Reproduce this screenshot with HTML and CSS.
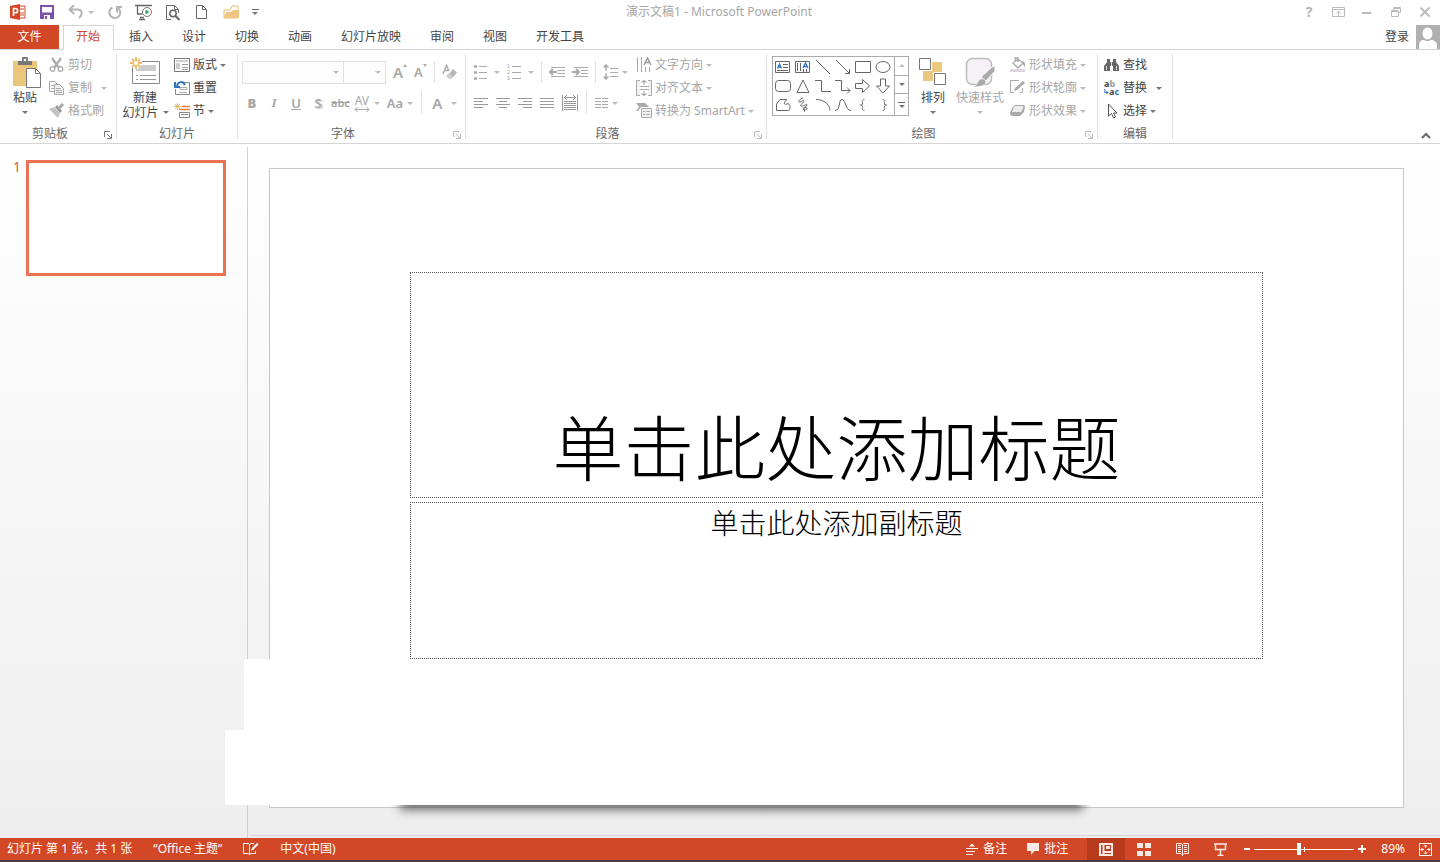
FILE: index.html
```html
<!DOCTYPE html>
<html lang="zh-CN">
<head>
<meta charset="utf-8">
<title>演示文稿1 - Microsoft PowerPoint</title>
<link rel="stylesheet" href="styles.css">
</head>
<body>
<div class="app">
  <header class="titlebar">
    <div class="quick">
      <button class="qbtn" aria-label="PowerPoint"><svg width="16" height="16" viewBox="0 0 16 16"><path d="M9 2h6v12H9z" fill="#fff" stroke="#d24726"/><path d="M10 5h4M10 9h4M10 11h4" stroke="#d24726"/><path d="M0 2l10-2v16L0 14z" fill="#d24726"/><path d="M3.500 12V4.500h2a2 2 0 0 1 0 4.300h-2" fill="none" stroke="#fff" stroke-width="1.600"/></svg></button>
      <button class="qbtn" aria-label="保存"><svg width="14" height="14" viewBox="0 0 14 14"><path d="M1 1h12v12H1z" fill="#fff" stroke="#8050a8" stroke-width="2"/><path d="M1 7.500h12v5.500H1z" fill="#8050a8"/><path d="M4 10h6v4H4z" fill="#fff"/><path d="M5 11h2v3H5z" fill="#8050a8"/></svg></button>
      <div class="qsplit"><button class="qbtn" aria-label="撤消"><svg width="16" height="14" viewBox="0 0 16 14"><path d="M6 0L1.500 4.500 6 9M2 4.500h7c6 0 6 5 2 8.500" fill="none" stroke="#b4b4b4" stroke-width="2"/></svg></button><button class="drop off" aria-label="撤消选项"></button></div>
      <button class="qbtn" aria-label="重复"><svg width="15" height="15" viewBox="0 0 15 15"><path d="M4.500 2.500A5.500 5.500 0 1 0 10 3M9 7.500V2h5" fill="none" stroke="#b4b4b4" stroke-width="2"/></svg></button>
      <button class="qbtn" aria-label="放映"><svg width="18" height="17" viewBox="0 0 18 17"><path d="M0 1.500h17M2.500 2v8h5M9 13.500H5M10 15.500H4" fill="none" stroke="#666" stroke-width="1.300"/><circle cx="12" cy="8" r="4.500" fill="#fff" stroke="#777"/><path d="M10.500 5.500l4 2.500-4 2.500z" fill="#3c9b6b"/></svg></button>
      <button class="qbtn" aria-label="预览"><svg width="16" height="17" viewBox="0 0 16 17"><path d="M6 15.500H1.500v-14h8l4 4V9M9.500 1.500v4h4" fill="none" stroke="#666"/><circle cx="8" cy="9.500" r="3.200" fill="#fff" stroke="#666" stroke-width="1.500"/><path d="M10.500 12l4 4" stroke="#666" stroke-width="2.200"/></svg></button>
      <button class="qbtn" aria-label="新建"><svg width="12" height="15" viewBox="0 0 12 15"><path d="M.5.5h6l4 4v9H.5zM6.500.5v4h4" fill="#fff" stroke="#666"/></svg></button>
      <button class="qbtn" aria-label="打开"><svg width="17" height="14" viewBox="0 0 17 14"><path d="M1 13V5h6l2-4h6v12z" fill="#fff" stroke="#e8bd6e"/><path d="M1 13l2-6h5l2-2h6v8z" fill="#efc782"/></svg></button>
      <button class="drop bar" aria-label="自定义快速访问工具栏"></button>
    </div>
    <h1 class="title">演示文稿1 - Microsoft PowerPoint</h1>
    <div class="winbtns">
      <button class="wbtn help" aria-label="帮助">?</button>
      <button class="wbtn" aria-label="功能区显示选项"><svg width="13" height="10" viewBox="0 0 13 10"><path d="M.5.500h12v9H.5zM0 2.500h13M6.500 9V4.500M4 6.500l2.500-2.500L9 6.500" fill="none" stroke="#bbb"/></svg></button>
      <button class="wbtn" aria-label="最小化"><svg width="10" height="10" viewBox="0 0 10 10"><path d="M0 6h9" stroke="#bbb" stroke-width="2"/></svg></button>
      <button class="wbtn" aria-label="还原"><svg width="10" height="10" viewBox="0 0 10 10"><path d="M2.500 3V.5h7v5H7M.5 3.500h7v6h-7zM0 4.500h8M2 1.500h8" fill="none" stroke="#bbb"/></svg></button>
      <button class="wbtn" aria-label="关闭"><svg width="10" height="10" viewBox="0 0 10 10"><path d="M.5.5l9 9M9.500.5l-9 9" stroke="#bbb" stroke-width="2"/></svg></button>
    </div>
  </header>

  <nav class="tabs">
    <button class="file">文件</button>
    <button class="tab active">开始</button>
    <div class="tablist">
      <button class="tab">插入</button><button class="tab">设计</button><button class="tab">切换</button><button class="tab">动画</button><button class="tab">幻灯片放映</button><button class="tab">审阅</button><button class="tab">视图</button><button class="tab">开发工具</button>
    </div>
    <div class="account">
      <button class="tab">登录</button>
      <svg width="24" height="24" viewBox="0 0 24 24"><path d="M0 0h24v24H0z" fill="#b0b0b0"/><ellipse cx="11.500" cy="8.500" rx="5" ry="6" fill="#fff"/><path d="M3 24v-4c0-3 2-5 5-5 2 1.500 5 1.500 7 0 3 0 6 2 6 5v4z" fill="#fff"/></svg>
    </div>
  </nav>

  <section class="ribbon">
    <div class="group g-clip">
      <div class="body">
        <button class="big"><svg width="34" height="32" viewBox="-5 0 34 32"><path d="M0 4h24v25H0z" fill="#ebc67c"/><path d="M5 8V4h4V2a3 3 0 0 1 6 0v2h4v4z" fill="#777"/><circle cx="12" cy="3" r="1.300" fill="#fff"/><path d="M13.500 11.500h9l5 5v14h-14z" fill="#fff" stroke="#777"/><path d="M22.500 11.500v5h5" fill="none" stroke="#777"/></svg><span>粘贴</span><i class="caret"></i></button>
        <div class="stack">
          <button class="cmd off"><svg width="16" height="16" viewBox="0 0 16 16"><path d="M3 1l7 10M12 1L5 11" stroke="#aaa" stroke-width="2.200"/><circle cx="3.500" cy="12" r="2.300" fill="#fff" stroke="#aaa" stroke-width="1.300"/><circle cx="11.500" cy="12" r="2.300" fill="#fff" stroke="#aaa" stroke-width="1.300"/></svg>剪切</button>
          <button class="cmd off"><svg width="16" height="16" viewBox="0 0 16 16"><path d="M.5 1.500h5l3 3v7h-8z" fill="#fff" stroke="#aaa"/><path d="M2 5.500h3M2 8.500h3" stroke="#aaa"/><path d="M5.500 4.500h5l4 4v6h-9z" fill="#f3eff5" stroke="#aaa"/><path d="M7 8.500h5M7 10.500h6M7 12.500h6" stroke="#aaa"/></svg>复制<i class="caret far"></i></button>
          <button class="cmd off"><svg width="16" height="16" viewBox="0 0 16 16"><path d="M0 6l5-2 6 6-2 5z" fill="#c4c0c6"/><path d="M6 4l5 6 2-2-5-6z" fill="#999"/><path d="M10 5l4-4" stroke="#aaa" stroke-width="3"/></svg>格式刷</button>
        </div>
      </div>
      <footer class="label">剪贴板</footer><button class="launch" aria-label="剪贴板选项"><svg width="8" height="8" viewBox="0 0 8 8"><path d="M.5 6V.5H6M3 3l4 4M7.500 3v4.500H3" fill="none" stroke="currentColor"/></svg></button>
    </div>

    <div class="group g-slides">
      <div class="body">
        <button class="big"><svg width="32" height="32" viewBox="0 0 32 32"><path d="M3.500 4.500h27v22h-27z" fill="#fff" stroke="#888"/><path d="M7 8h20v6H7z" fill="#ccc"/><path d="M7 18.500h2M11 18.500h16M7 22.500h2M11 22.500h16" stroke="#999"/><path d="M7 0v12M1 6h12M3 2l8 8M11 2l-8 8" stroke="#fff" stroke-width="4"/><path d="M7 0v12M1 6h12M3 2l8 8M11 2l-8 8" stroke="#ebc067" stroke-width="2"/><circle cx="7" cy="6" r="2" fill="#fff"/></svg><span>新建</span><span>幻灯片<i class="caret"></i></span></button>
        <div class="stack">
          <button class="cmd"><svg width="16" height="16" viewBox="0 0 16 16"><path d="M.5 1.500h15v13H.5z" fill="#fff" stroke="#777"/><path d="M2 3h12v2H2zM2 6h4v6H2z" fill="#ccc"/><path d="M8 7.500h6M8 10.500h6M8 12.500h6" stroke="#999"/></svg>版式<i class="caret"></i></button>
          <button class="cmd"><svg width="16" height="16" viewBox="0 0 16 16"><path d="M9 2.500h6.500v12h-14V9" fill="none" stroke="#888"/><path d="M6 7.500h7v2H6zM5 12.500h8" fill="none" stroke="#aaa"/><path d="M3 6c1-5 6-5 8-1M1 2v5h5" fill="none" stroke="#2f75b8" stroke-width="2"/></svg>重置</button>
          <button class="cmd"><svg width="16" height="16" viewBox="0 0 16 16"><path d="M3.500 0v7M0 3.500h7M1 1l5 5M6 1L1 6" stroke="#ebc067"/><path d="M8 3.500h8M5 6.500h11" stroke="#e5813a" stroke-width="1.500"/><path d="M5.500 9.500h10v5h-10zM7 11.500h7" fill="none" stroke="#888"/></svg>节<i class="caret"></i></button>
        </div>
      </div>
      <footer class="label">幻灯片</footer>
    </div>

    <div class="group g-font">
      <div class="body rows">
        <div class="row r1">
          <div class="combos"><select class="combo face" aria-label="字体" disabled></select><select class="combo size" aria-label="字号" disabled></select></div>
          <button class="ic glyph grow" aria-label="增大字号">A<i class="tip up"></i></button>
          <button class="ic glyph shrink" aria-label="减小字号">A<i class="tip"></i></button>
          <i class="vsep"></i>
          <button class="ic" aria-label="清除格式"><svg width="16" height="16" viewBox="0 0 16 16"><path d="M1 10L4.500 1.500 7 7M2.500 6.500h4" fill="none" stroke="#aaa" stroke-width="1.500"/><path d="M7 10l4-5 4 3.500-4 5z" fill="#b8b4ba"/><path d="M4 12l3-3 4 4-2 2H7z" fill="#ccc"/></svg></button>
        </div>
        <div class="row r2">
          <button class="ic glyph"><b>B</b></button><button class="ic glyph ital">I</button><button class="ic glyph"><u>U</u></button><button class="ic glyph shade">S</button><button class="ic glyph strike">abc</button>
          <button class="ic" aria-label="字符间距"><span class="av">AV<svg width="16" height="5" viewBox="0 0 16 5"><path d="M1 2.500h14M3.500 0L1 2.500 3.500 5M12.500 0L15 2.500 12.500 5" fill="none" stroke="#aaa"/></svg></span><i class="caret"></i></button>
          <button class="ic glyph case">Aa<i class="caret"></i></button>
          <i class="vsep"></i>
          <button class="ic glyph color">A<i class="caret"></i></button>
        </div>
      </div>
      <footer class="label">字体</footer><button class="launch off" aria-label="字体选项"><svg width="8" height="8" viewBox="0 0 8 8"><path d="M.5 6V.5H6M3 3l4 4M7.500 3v4.500H3" fill="none" stroke="currentColor"/></svg></button>
    </div>

    <div class="group g-para">
      <div class="body">
        <div class="rows">
          <div class="row r1">
            <button class="ic" aria-label="项目符号"><svg width="14" height="15" viewBox="0 0 14 15"><path d="M0 1.500h3M0 7.500h3M0 13.500h3" stroke="#aaa" stroke-width="2.500"/><path d="M5 1.500h8M5 7.500h8M5 13.500h8" stroke="#aaa"/></svg><i class="caret"></i></button>
            <button class="ic" aria-label="编号"><svg class="num" width="15" height="18" viewBox="0 0 15 18"><text x="0" y="5">1</text><text x="0" y="11">2</text><text x="0" y="17">3</text><path d="M5 3.500h9M5 9.500h9M5 15.500h9" stroke="#aaa"/></svg><i class="caret"></i></button>
            <i class="vsep"></i>
            <button class="ic" aria-label="减少缩进"><svg width="16" height="10" viewBox="0 0 16 10"><path d="M2 .5h14M8 3.500h8M8 6.500h8M2 9.500h14" stroke="#aaa"/><path d="M8 5H1M4 2L1 5l3 3" fill="none" stroke="#aaa" stroke-width="2"/></svg></button>
            <button class="ic" aria-label="增加缩进"><svg width="16" height="10" viewBox="0 0 16 10"><path d="M2 .5h14M9 3.500h7M9 6.500h7M2 9.500h14" stroke="#aaa"/><path d="M0 5h7M4 2l3 3-3 3" fill="none" stroke="#aaa" stroke-width="2"/></svg></button>
            <i class="vsep"></i>
            <button class="ic tight" aria-label="行距"><svg width="16" height="16" viewBox="0 0 16 16"><path d="M3 1v6M3 9v6M.5 3.500L3 1l2.500 2.500M.5 12.500L3 15l2.500-2.500" fill="none" stroke="#aaa" stroke-width="1.500"/><path d="M7 4.500h8M7 8.500h8M7 12.500h8" stroke="#aaa"/></svg><i class="caret"></i></button>
          </div>
          <div class="row r2">
            <button class="ic" aria-label="左对齐"><svg width="14" height="10" viewBox="0 0 14 10"><path d="M0 .5h14M0 3.500h9M0 6.500h14M0 9.500h9" stroke="#999"/></svg></button>
            <button class="ic" aria-label="居中"><svg width="14" height="10" viewBox="0 0 14 10"><path d="M0 .5h14M3 3.500h8M0 6.500h14M3 9.500h8" stroke="#999"/></svg></button>
            <button class="ic" aria-label="右对齐"><svg width="14" height="10" viewBox="0 0 14 10"><path d="M0 .5h14M5 3.500h9M0 6.500h14M5 9.500h9" stroke="#999"/></svg></button>
            <button class="ic" aria-label="两端对齐"><svg width="14" height="10" viewBox="0 0 14 10"><path d="M0 .5h14M0 3.500h14M0 6.500h14M0 9.500h14" stroke="#999"/></svg></button>
            <button class="ic" aria-label="分散对齐"><svg width="16" height="16" viewBox="0 0 16 16"><path d="M.5 0v16M15.500 0v16M2 6.500h12M2 8.500h12M2 10.500h12M2 12.500h12M2 14.500h12M2 2.500h12M5 0L2.500 2.500 5 5M11 0l2.500 2.500L11 5" fill="none" stroke="#999"/></svg></button>
            <i class="vsep"></i>
            <button class="ic" aria-label="分栏"><svg width="13" height="10" viewBox="0 0 13 10"><path d="M0 .5h6M0 3.500h6M0 6.500h6M0 9.500h6M7 .5h6M7 3.500h6M7 6.500h6M7 9.500h6" stroke="#aaa"/></svg><i class="caret"></i></button>
          </div>
        </div>
        <div class="stack">
          <button class="cmd off"><svg width="16" height="16" viewBox="0 0 16 16"><path d="M1.500 0v15M5.500 0v15M9.500 10v5M13.500 10v5" stroke="#aaa"/><path d="M8 8l3.500-7L15 8M9 5.500h5" fill="none" stroke="#999" stroke-width="1.400"/></svg>文字方向<i class="caret"></i></button>
          <button class="cmd off"><svg width="16" height="16" viewBox="0 0 16 16"><path d="M4 .5H.5v15H4M12 .5h3.500v15H12" fill="#f3eff5" stroke="#aaa"/><path d="M4 6.500h9M4 9.500h9M8 5V0M8 11v5M5.500 2.500L8 .5l2.500 2M5.500 13.500l2.500 2 2.500-2" fill="none" stroke="#aaa" stroke-width="1.200"/></svg>对齐文本<i class="caret"></i></button>
          <button class="cmd off"><svg width="16" height="16" viewBox="0 0 16 16"><path d="M0 0h9l4 4H5L2 8H0l3-4z" fill="#aaa"/><path d="M5.500 5.500h10v9h-10z" fill="#f3eff5" stroke="#aaa"/><path d="M7 8.500h2M10 8.500h4M7 11.500h2M10 11.500h4" stroke="#aaa"/></svg>转换为 SmartArt<i class="caret"></i></button>
        </div>
      </div>
      <footer class="label">段落</footer><button class="launch off" aria-label="段落选项"><svg width="8" height="8" viewBox="0 0 8 8"><path d="M.5 6V.5H6M3 3l4 4M7.500 3v4.500H3" fill="none" stroke="currentColor"/></svg></button>
    </div>

    <div class="group g-draw">
      <div class="body">
        <div class="gallery">
          <div class="shapes">
            <button class="shape" aria-label="文本框"><svg width="16" height="16" viewBox="0 0 16 16"><path d="M.5 2.500h14v11H.5zM8 5.500h5M8 8.500h5M2 11.500h11"/><path d="M2.500 9.500L4.500 5 6.500 9.500M3.500 8h2" stroke="#2f75b8" stroke-width="1.300"/></svg></button>
            <button class="shape" aria-label="竖排文本框"><svg width="16" height="16" viewBox="0 0 16 16"><path d="M.5 2.500h14v11H.5zM2.500 4v8M5.500 4v8M8.500 10v3M11.500 10v3"/><path d="M8 9l2.500-5L13 9M9 7.500h3" stroke="#2f75b8" stroke-width="1.300"/></svg></button>
            <button class="shape" aria-label="直线"><svg width="16" height="16" viewBox="0 0 16 16"><path d="M1 1l14 14"/></svg></button>
            <button class="shape" aria-label="箭头"><svg width="16" height="16" viewBox="0 0 16 16"><path d="M1 1l14 14M14.500 10v4.500H10"/></svg></button>
            <button class="shape" aria-label="矩形"><svg width="16" height="16" viewBox="0 0 16 16"><path d="M.5 2.500h15v11H.5z"/></svg></button>
            <button class="shape" aria-label="椭圆"><svg width="16" height="16" viewBox="0 0 16 16"><ellipse cx="8" cy="8" rx="7" ry="5.500"/></svg></button>
            <button class="shape" aria-label="圆角矩形"><svg width="16" height="16" viewBox="0 0 16 16"><rect x=".5" y="2.500" width="15" height="11" rx="3"/></svg></button>
            <button class="shape" aria-label="三角形"><svg width="16" height="16" viewBox="0 0 16 16"><path d="M8 2L2 14.500h12z"/></svg></button>
            <button class="shape" aria-label="肘形连接符"><svg width="16" height="16" viewBox="0 0 16 16"><path d="M0 2.500h6.500v11H16"/></svg></button>
            <button class="shape" aria-label="肘形箭头"><svg width="16" height="16" viewBox="0 0 16 16"><path d="M0 2.500h6.500v10H15M12 9.500l3 3-3 3"/></svg></button>
            <button class="shape" aria-label="右箭头"><svg width="16" height="16" viewBox="0 0 16 16"><path d="M.5 5.500h7V1.500l7 6.500-7 6.500v-4h-7z"/></svg></button>
            <button class="shape" aria-label="下箭头"><svg width="16" height="16" viewBox="0 0 16 16"><path d="M5.500 1v7H1.500l6.500 7 6.500-7h-4V1z"/></svg></button>
            <button class="shape" aria-label="任意多边形"><svg width="16" height="16" viewBox="0 0 16 16"><path d="M5 2.500h7c-5 4-2 6 1 4 2 1 2 3 2 4 0 3-1 3-3 3H1.500V7z"/></svg></button>
            <button class="shape" aria-label="自由曲线"><svg width="16" height="16" viewBox="0 0 16 16"><path d="M8 1C5 2 3 4 4 5s5-3 5-1-5 4-3 5 6-3 6-1-4 2-4 4 4 1 4-.5-3-1-3 .5 1 2 0 3"/></svg></button>
            <button class="shape" aria-label="弧形"><svg width="16" height="16" viewBox="0 0 16 16"><path d="M1 2.500c8 0 14 5 14 11"/></svg></button>
            <button class="shape" aria-label="曲线"><svg width="16" height="16" viewBox="0 0 16 16"><path d="M0 13.500c6 0 3-11 7-11s3 11 9 11"/></svg></button>
            <button class="shape" aria-label="左大括号"><svg width="16" height="16" viewBox="0 0 16 16"><path d="M9.500 2.500c-3 0-2 2-2 3.500S7.500 8 5.500 8c2 0 2 1 2 2s-1 3.500 2 3.500"/></svg></button>
            <button class="shape" aria-label="右大括号"><svg width="16" height="16" viewBox="0 0 16 16"><path d="M7.500 2.500c3 0 2 2 2 3.500s0 2 2 2c-2 0-2 1-2 2s1 3.500-2 3.500"/></svg></button>
          </div>
          <div class="scroller"><button class="drop up off" aria-label="上一行"></button><button class="drop" aria-label="下一行"></button><button class="drop bar" aria-label="其他形状"></button></div>
        </div>
        <button class="big arrange"><svg width="28" height="28" viewBox="0 0 28 28"><path d="M4 4h19v19H4z" fill="#ecc77f"/><path d="M0 0h13v13H0zM14 14h13v13H14z" fill="#fff"/><path d="M.5.500h11v11H.5zM15.500 15.500h11v11h-11z" fill="#fff" stroke="#777"/></svg><span>排列</span><i class="caret"></i></button>
        <button class="big off styles"><svg width="32" height="32" viewBox="0 0 32 32"><rect x="2.500" y="1.500" width="25" height="26" rx="6" fill="#f5f1f7" stroke="#bbb" stroke-width="1.500"/><path d="M17 20L28 10l3-1v5l-9 10z" fill="#aaa" stroke="#fff"/><path d="M9 30c5-1 4-7 8-8s6 3 4 5-7 3-12 3z" fill="#aaa" stroke="#fff" stroke-width=".5"/></svg><span>快速样式</span><i class="caret"></i></button>
        <div class="stack">
          <button class="cmd off"><svg width="16" height="16" viewBox="0 0 16 16"><path d="M3 6l5-4 5 4-5 5zM5 5V1h3v4" fill="#fff" stroke="#aaa" stroke-width="1.300"/><path d="M12 4c4 1 3 4 3 6-2-1-2-4-3-6z" fill="#aaa"/><path d="M0 12h15v3H0z" fill="#dcd8de"/></svg>形状填充<i class="caret"></i></button>
          <button class="cmd off"><svg width="16" height="16" viewBox="0 0 16 16"><path d="M9 .5H.5v12H4M12.500 8v4.500H10" fill="none" stroke="#aaa"/><path d="M4 11l1-3 8-7 2 2-8 7z" fill="#aaa"/></svg>形状轮廓<i class="caret"></i></button>
          <button class="cmd off"><svg width="16" height="16" viewBox="0 0 16 16"><path d="M5 2h8q2 0 2 2l-1 5-4 4H3q-3 0-3-3l2-5z" fill="#aaa"/><path d="M5 3h7q2 0 1 2l-2 4H2l2-5z" fill="#eee"/></svg>形状效果<i class="caret"></i></button>
        </div>
      </div>
      <footer class="label">绘图</footer><button class="launch off" aria-label="绘图选项"><svg width="8" height="8" viewBox="0 0 8 8"><path d="M.5 6V.5H6M3 3l4 4M7.500 3v4.500H3" fill="none" stroke="currentColor"/></svg></button>
    </div>

    <div class="group g-edit">
      <div class="body">
        <div class="stack">
          <button class="cmd"><svg width="16" height="16" viewBox="0 0 16 16"><path d="M3 2h3v3h3V2h3v3l3 4v5H9V9H6v5H0V9l3-4z" fill="#666"/><path d="M2.500 9v4M12.500 9v4M7.500 5v4" stroke="#ddd"/></svg>查找</button>
          <button class="cmd"><svg class="rep" width="16" height="16" viewBox="0 0 16 16"><text x="0" y="7">a<tspan fill="#999">b</tspan><tspan x="5" y="15">a</tspan><tspan fill="#2f75b8">c</tspan></text><path d="M.8 9v3.500H4M2.500 11L4 12.500 2.500 14" fill="none" stroke="#2f75b8"/></svg>替换<i class="caret far"></i></button>
          <button class="cmd"><svg width="16" height="16" viewBox="0 0 16 16"><path d="M4.500 1v12l3-2.500 2 4.500 2-1-2-4h3.500z" fill="#fff" stroke="#555"/></svg>选择<i class="caret"></i></button>
        </div>
      </div>
      <footer class="label">编辑</footer>
    </div>
    <button class="collapse" aria-label="折叠功能区"><svg width="10" height="7" viewBox="0 0 10 7"><path d="M1 6l4-4 4 4" fill="none" stroke="#666" stroke-width="2"/></svg></button>
  </section>

  <main class="work">
    <aside class="thumbs"><span class="n">1</span><button class="thumb" aria-label="幻灯片 1"></button></aside>
    <section class="canvas">
      <article class="slide">
        <div class="ph ph-title"><h2>单击此处添加标题</h2></div>
        <div class="ph ph-sub"><p>单击此处添加副标题</p></div>
      </article>
      <div class="shadow"></div>
      <div class="cover upper"></div>
      <div class="cover lower"></div>
    </section>
  </main>

  <footer class="status">
    <div class="sleft"><span>幻灯片 第 1 张，共 1 张</span><span>“Office 主题”</span><button class="sbtn" aria-label="拼写检查"><svg width="16" height="14" viewBox="0 0 16 14"><path d="M6.500 2.500L5 1.500H.5v10H5l1.500 1 1.500-1h4.500V9M6.500 2.500v9M6.500 2.500L8 1.500h3" fill="none" stroke="#fff"/><path d="M8 9l1-3 5-5 1.500 1.500-5 5z" fill="#fff"/></svg></button><span>中文(中国)</span></div>
    <div class="sright">
      <button class="sbtn notes"><svg width="12" height="12" viewBox="0 0 12 12"><path d="M3 3.500L6 .5l3 3z" fill="#fff"/><path d="M0 5.500h12M0 8.500h9M0 11.500h7" stroke="#fff"/></svg>备注</button>
      <button class="sbtn comments"><svg width="12" height="12" viewBox="0 0 12 12"><path d="M0 0h12v8H7.500L4 12V8H0z" fill="#fdeae5"/></svg>批注</button>
      <div class="views">
        <button class="view on" aria-label="普通视图"><svg width="14" height="13" viewBox="0 0 14 13"><path d="M1 1h12v11H1zM4.500 1v11M4.500 9h9" fill="none" stroke="#fdeae5" stroke-width="2"/><path d="M7 3h4v3H7z" fill="#fdeae5"/></svg></button>
        <button class="view" aria-label="幻灯片浏览"><svg width="14" height="13" viewBox="0 0 14 13"><path d="M0 0h6v5H0zM8 0h6v5H8zM0 8h6v5H0zM8 8h6v5H8z" fill="#fdeae5"/></svg></button>
        <button class="view" aria-label="阅读视图"><svg width="13" height="13" viewBox="0 0 13 13"><path d="M6.500 1.500L5 .5H.5v10H5l1.500 1.500L8 10.500h4.500V.5H8zM6.500 1v12M2 2.500h3M2 4.500h3M2 6.500h3M2 8.500h3M8 2.500h3M8 4.500h3M8 6.500h3M8 8.500h3" fill="none" stroke="#fdeae5"/></svg></button>
        <button class="view" aria-label="幻灯片放映"><svg width="13" height="13" viewBox="0 0 13 13"><path d="M0 1h13M1.500 1v5.500h10V1M6.500 7v5M3.500 12.500h6" fill="none" stroke="#fdeae5" stroke-width="1.500"/></svg></button>
      </div>
      <button class="sbtn" aria-label="缩小"><svg width="6" height="8" viewBox="0 0 6 8"><path d="M0 4h6" stroke="#fff" stroke-width="2"/></svg></button>
      <input class="zoom" type="range" min="10" max="186" value="89" aria-label="显示比例">
      <button class="sbtn" aria-label="放大"><svg width="8" height="8" viewBox="0 0 8 8"><path d="M0 4h8M4 0v8" stroke="#fff" stroke-width="2"/></svg></button>
      <button class="sbtn pct">89%</button>
      <button class="sbtn" aria-label="适应窗口"><svg width="13" height="13" viewBox="0 0 13 13"><path d="M.5.500h12v12H.5zM6.500 2v3M5 3.500l1.500-1.500L8 3.500M6.500 11V8M5 9.500L6.500 11 8 9.500M2 6.500h3M3.500 5L2 6.500 3.500 8M11 6.500H8M9.500 5L11 6.500 9.500 8" fill="none" stroke="#fff"/></svg></button>
    </div>
  </footer>
</div>
</body>
</html>
```

FILE: styles.css
```css
* { box-sizing: border-box; }
body { margin: 0; background: #fff; color: #444; font: 12px/16px "Noto Sans", "Noto Sans CJK SC", sans-serif; }
button { margin: 0; padding: 0; border: 0; background: none; color: inherit; font: inherit; white-space: nowrap; }
svg { display: block; flex: none; }
h1, h2, p { margin: 0; font-weight: 400; }
.app { display: flex; flex-direction: column; min-height: 100vh; }

/* Title bar */
.titlebar { display: grid; grid-template-columns: 1fr auto 1fr; align-items: center; height: 24px; padding: 0 5px 0 8px; }
.quick { display: flex; align-items: center; gap: 9px; }
.qsplit { display: flex; align-items: center; }
.qbtn { display: grid; place-items: center; width: 20px; height: 22px; }
.title { padding-right: 5px; color: #a6a6a6; font-size: 12px; }
.winbtns { display: flex; justify-content: flex-end; gap: 9px; }
.wbtn { display: grid; place-items: center; width: 20px; height: 22px; }
.help { color: #b4b4b4; font-size: 14px; font-weight: 700; }

.drop { display: grid; place-items: center; width: 10px; height: 16px; color: #666; }
.drop::after, .caret { content: ""; display: block; flex: none; width: 0; height: 0; border: 3px solid transparent; border-top-color: #777; border-bottom: 0; }
.drop.bar::before { content: ""; width: 7px; height: 1px; background: #666; }
.drop.bar { align-content: center; gap: 2px; }
.off .caret, .drop.off::after, .ic .caret { border-top-color: #bbb; }
.drop.up::after { border-top: 0; border-bottom: 3px solid #bbb; }

/* Tabs */
.tabs { display: flex; height: 26px; align-items: stretch; padding-top: 1px; border-bottom: 1px solid #d5d5d5; }
.file { width: 59px; margin-right: 4px; background: #d24726; color: #fff; }
.tab.active { width: 51px; height: 25px; padding: 0 1px 3px 0; border: 1px solid #d5d5d5; border-bottom: 0; background: #fff; color: #d24726; }
.tablist { display: flex; gap: 29px; padding-left: 15px; }
.account { display: flex; align-items: center; gap: 7px; margin-left: auto; }

/* Ribbon */
.ribbon { position: relative; display: flex; height: 94px; padding: 4px 0; border-bottom: 1px solid #d5d5d5; }
.group { position: relative; display: flex; flex-direction: column; flex: none; border-right: 1px solid #e1e1e1; height: 85px; }
.g-clip { width: 117px; }
.g-slides { width: 121px; }
.g-font { width: 228px; }
.g-para { width: 301px; }
.g-draw { width: 331px; }
.g-edit { width: 75px; }
.body { display: flex; flex: 1; }
.label { height: 10px; line-height: 10px; text-align: center; color: #666; }
.g-clip .label { padding-right: 16px; }
.g-para .label, .g-draw .label, .g-font .label { padding-right: 17px; }
.launch { position: absolute; right: 4px; bottom: 0; color: #777; }
.launch.off { color: #bbb; }
.big { display: flex; flex-direction: column; align-items: center; padding-top: 3px; }
.big span { display: flex; align-items: center; gap: 4px; line-height: 15px; }
.big svg { margin-bottom: 1px; }
.big > .caret { margin-top: 6px; }
.off { color: #a6a6a6; }
.g-clip .big { width: 28px; margin: 0 10px 0 11px; }
.g-slides .big { width: 46px; margin: 0 6px 0 5px; }
.g-slides .big span:last-child { padding-left: 1px; }
.stack { display: flex; flex-direction: column; gap: 7px; padding-top: 3px; }
.cmd { display: flex; align-items: center; gap: 3px; height: 16px; }
.far { margin-left: 6px; }

.body.rows { flex-direction: column; }
.row { display: flex; align-items: center; height: 24px; }
.r1 { margin-top: 6px; }
.r2 { margin-top: 7px; }
.vsep { flex: none; width: 1px; height: 22px; background: #e1e1e1; }
.ic { display: flex; align-items: center; justify-content: center; gap: 6px; color: #a6a6a6; }
.r2 .ic { gap: 4px; }
.ic.tight { gap: 3px; }
.glyph { font-size: 13px; font-weight: 600; }
.combos { display: flex; padding-left: 4px; }
.combo { height: 23px; margin: 0; border: 1px solid #e1e1e1; border-radius: 0; opacity: 1; appearance: none; background: url("data:image/svg+xml,%3Csvg xmlns='http://www.w3.org/2000/svg' width='6' height='3'%3E%3Cpath d='M0 0h6L3 3z' fill='%23bbb'/%3E%3C/svg%3E") no-repeat right 4px center #fdfdfd; }
.combo.face { width: 102px; }
.combo.size { width: 43px; margin-left: -1px; }
.g-font .r1 { gap: 7px; }
.glyph.grow, .glyph.shrink { gap: 0; }
.tip { align-self: flex-start; border: 2px solid transparent; border-top: 3px solid #aaa; border-bottom: 0; }
.tip.up { border-top: 0; border-bottom: 3px solid #aaa; }
.grow { font-size: 15px; }
.g-font .r2 { gap: 4px; padding-left: 5px; }
.g-font .r2 .glyph { min-width: 18px; }
.g-font .r2 .case { margin: 0 4px 0 3px; }
.g-font .r2 .color { gap: 9px; margin-left: 6px; font-size: 15px; }
.ital { font-family: "Liberation Serif", serif; font-style: italic; }
.shade { text-shadow: 2px 1px 1px #ccc; }
.strike { font-size: 11px; text-decoration: line-through; }
.av { display: flex; flex-direction: column; align-items: center; font-size: 12px; line-height: 12px; }
.num text { fill: #999; font: 5px "Liberation Sans", sans-serif; }
.rep { overflow: visible; }
.rep text { fill: #444; font: 700 9px "Noto Sans", sans-serif; }
.g-para .rows { width: 170px; }
.g-para .row { padding-left: 8px; }
.g-para .r1 { gap: 7px; }
.g-para .r2 { gap: 8px; }

.gallery { display: flex; width: 137px; height: 60px; margin: 2px 10px 0 5px; border: 1px solid #ababab; }
.shapes { display: grid; grid-template-columns: repeat(6, 20px); flex: 1; }
.shape { display: grid; place-items: center; }
.shape svg { fill: none; stroke: #666; }
.scroller { display: grid; width: 14px; border-left: 1px solid #ababab; }
.scroller .drop { width: 100%; height: auto; }
.scroller .drop + .drop { border-top: 1px solid #ababab; }
.arrange { width: 28px; margin-right: 9px; }
.arrange svg { margin: 1px 0 4px; }
.styles { width: 48px; margin-right: 6px; }
.g-edit .stack { padding-left: 6px; }
.collapse { position: absolute; right: 9px; bottom: 4px; }

/* Work area */
.work { display: flex; flex: 1; padding-top: 3px; background: linear-gradient(#fff, #eee); }
.thumbs { display: flex; align-items: flex-start; gap: 5px; width: 248px; flex: none; padding: 13px 0 0 13px; border-right: 1px solid #d0d0d0; }
.n { width: 8px; color: #e0593a; font-size: 14px; line-height: 14px; }
.thumb { width: 200px; height: 116px; border: 3px solid #ed7254; background: #fff; }
.canvas { position: relative; flex: 1; display: flex; padding: 21px 36px 30px 21px; }
.canvas::after { content: ""; position: absolute; left: 2px; right: 0; bottom: 2px; height: 1px; background: #d5d5d5; }
.slide { flex: 1; display: flex; flex-direction: column; align-items: center; gap: 4px; padding-top: 103px; border: 1px solid #c6c6c6; background: #fff; }
.ph { display: flex; justify-content: center; width: 75.3%; border: 1px dotted #555; color: #000; }
.ph-title { align-items: flex-end; height: 226px; }
.ph-sub { height: 157px; }
.ph h2 { font-size: 71px; line-height: 98px; font-weight: 300; }
.ph p { font-size: 28px; line-height: 40px; font-weight: 300; }
.cover { position: absolute; background: #fff; }
.upper { left: -4px; right: 50px; bottom: 108px; height: 71px; }
.lower { left: -23px; right: 50px; bottom: 33px; height: 75px; }
.shadow { position: absolute; left: 154px; right: 359px; bottom: 33px; height: 40px; box-shadow: 0 2px 10px 2px #555; }

/* Status bar */
.status { display: flex; justify-content: space-between; height: 24px; padding: 0 8px 0 7px; border-bottom: 2px solid #4b3a48; background: #d24726; color: #fff; }
.sleft, .sright, .views { display: flex; align-items: center; }
.sleft { gap: 21px; }
.sbtn { display: flex; align-items: center; gap: 5px; }
.comments { margin: 0 19px 0 20px; }
.views { align-self: stretch; margin-right: 5px; }
.view { display: grid; place-items: center; width: 38px; height: 22px; }
.view.on { background: #b83b1d; }
.zoom { width: 100px; height: 16px; margin: 0 4px; appearance: none; background: linear-gradient(#fff, #fff) no-repeat center / 100% 1px, linear-gradient(#fff, #fff) no-repeat 50px center / 1px 5px; }
.zoom::-webkit-slider-thumb { appearance: none; width: 4px; height: 12px; background: #fff; }
.pct { margin: 0 14px 0 15px; }
```
